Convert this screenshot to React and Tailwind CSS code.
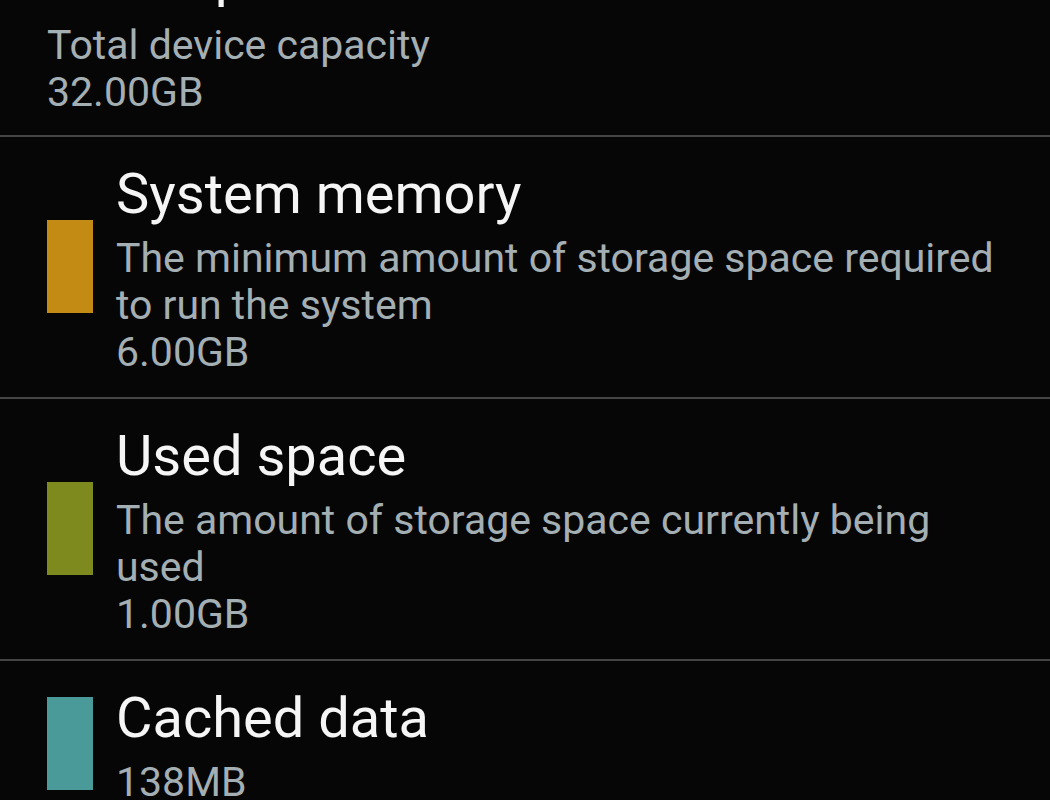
export default function App() {
  const font = { fontFamily: 'Roboto, "Liberation Sans", sans-serif' };
  const rows = [
    {
      color: "bg-[#c38b14]",
      title: "System memory",
      lines: ["The minimum amount of storage space required", "to run the system", "6.00GB"],
    },
    {
      color: "bg-[#7e8a1e]",
      title: "Used space",
      lines: ["The amount of storage space currently being", "used", "1.00GB"],
    },
    {
      color: "bg-[#4a9a9a]",
      title: "Cached data",
      lines: ["138MB"],
    },
  ];
  return (
    <div
      className="w-[1050px] h-[800px] overflow-hidden bg-[#060606] font-['Roboto','Liberation_Sans',sans-serif]"
      style={font}
    >
      <div className="h-[135px] pl-[47px] overflow-hidden">
        <div className="-mt-[54px] h-[62px] text-[56px] leading-[62px] text-[#f5f5f5] whitespace-nowrap">
          Total space
        </div>
        <div className="mt-[14px] text-[41px] leading-[47px] text-[#a4afb4]">
          <div>Total device capacity</div>
          <div>32.00GB</div>
        </div>
      </div>
      {rows.map((r, i) => (
        <div key={i}>
          <div className="h-[2px] bg-[#454545]" />
          <div className="flex items-center pl-[47px] pt-[26px] pb-[21px]">
            <div className={`w-[46px] h-[93px] mb-[6px] shrink-0 ${r.color}`} />
            <div className="ml-[23px]">
              <div className="text-[56px] leading-[62px] text-[#f5f5f5] whitespace-nowrap">{r.title}</div>
              <div className="mt-[10px] text-[41px] leading-[47px] text-[#a4afb4]">
                {r.lines.map((l, j) => (
                  <div key={j} className="whitespace-nowrap">{l}</div>
                ))}
              </div>
            </div>
          </div>
        </div>
      ))}
    </div>
  );
}
